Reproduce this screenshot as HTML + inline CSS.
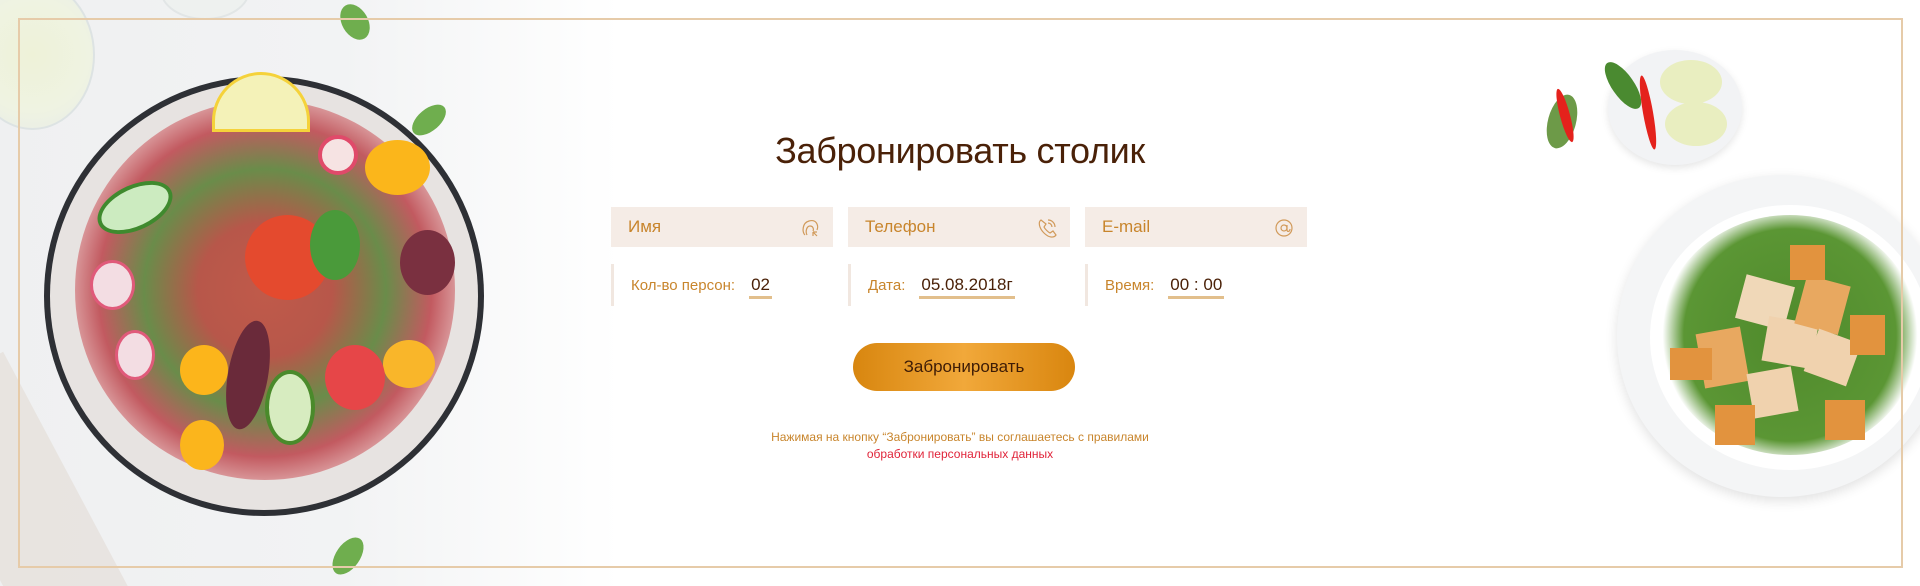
<!DOCTYPE html>
<html><head><meta charset="utf-8"><style>
*{margin:0;padding:0;box-sizing:border-box}
html,body{width:1920px;height:586px;overflow:hidden}
body{background:#fff;font-family:"Liberation Sans","DejaVu Sans",sans-serif}
#wrap{position:relative;width:1920px;height:586px;overflow:hidden}
.abs{position:absolute}
.frame{position:absolute;left:18px;top:18px;width:1885px;height:550px;border:2px solid #e6cba9}
.leftbg{position:absolute;left:0;top:0;width:620px;height:586px;background:linear-gradient(90deg,#eff0f1 0%,#f2f3f4 55%,rgba(255,255,255,0) 100%)}
h1{position:absolute;left:0;width:1920px;top:130px;text-align:center;font-size:36px;font-weight:normal;color:#4a2108;letter-spacing:-0.3px}
.inp{position:absolute;top:207px;width:222px;height:40px;background:#f5ece6;color:#c8852c;font-size:17px;line-height:40px;padding-left:17px}
.inp svg{position:absolute;right:12px;top:10px}
.row2{position:absolute;top:264px;height:42px;border-left:3px solid #f1e7e0;font-size:15px;color:#c8852c;line-height:44px;padding-left:17px;width:222px}
.val{display:inline-block;color:#4a2108;font-size:17px;border-bottom:3px solid #e2bf8c;line-height:22px;margin-left:14px;padding:0 2px}
.btn{position:absolute;left:853px;top:343px;width:222px;height:48px;border-radius:24px;background:linear-gradient(90deg,#d8860f 0%,#f1a83a 50%,#d9860f 100%);color:#3e1c06;font-size:17px;text-align:center;line-height:48px}
.note{position:absolute;left:0;width:1920px;top:429px;text-align:center;font-size:12px;line-height:17px;color:#c8852c}
.note span{color:#e0243a}
</style></head><body><div id="wrap">
<div class="leftbg"></div>
<div class="abs" style="left:-30px;top:360px;width:110px;height:300px;background:#e6e1dc;transform:rotate(-28deg);opacity:.8"></div>
<div class="abs" style="left:-30px;top:-20px;width:125px;height:150px;border-radius:50%;background:radial-gradient(circle,#eef2d8 0%,#eff3e2 60%,#e6ebe9 100%);border:2px solid #dde3e3"></div>
<div class="abs" style="left:160px;top:-40px;width:90px;height:60px;border-radius:50%;background:#eef1ef;border:2px solid #e2e6e6"></div>
<!-- left plate -->
<div class="abs" style="left:44px;top:76px;width:440px;height:440px;border-radius:50%;background:#2e3035"></div>
<div class="abs" style="left:50px;top:82px;width:428px;height:428px;border-radius:50%;background:#e7e3e1"></div>
<div class="abs" style="left:75px;top:100px;width:380px;height:380px;border-radius:50%;background:radial-gradient(circle at 50% 50%,#c05a4a 0%,#b7574a 25%,#6a8c4a 45%,#c25a60 62%,rgba(235,190,190,.8) 78%,rgba(231,227,225,0) 100%)"></div>
<div class="abs" style="left:212px;top:72px;width:98px;height:60px;border-radius:50px 50px 0 0;background:#f4f2b8;border:3px solid #f5d23a"></div>
<div class="abs" style="left:318px;top:135px;width:40px;height:40px;border-radius:50%;background:#f6e3e3;border:4px solid #e04a6a"></div>
<div class="abs" style="left:245px;top:215px;width:85px;height:85px;border-radius:50%;background:#e44a2e"></div>
<div class="abs" style="left:365px;top:140px;width:65px;height:55px;border-radius:50%;background:#fbb61b"></div>
<div class="abs" style="left:383px;top:340px;width:52px;height:48px;border-radius:50%;background:#f9b62a"></div>
<div class="abs" style="left:180px;top:345px;width:48px;height:50px;border-radius:50%;background:#fcb51b"></div>
<div class="abs" style="left:180px;top:420px;width:44px;height:50px;border-radius:50%;background:#fbb51c"></div>
<div class="abs" style="left:325px;top:345px;width:60px;height:65px;border-radius:50%;background:#e64648"></div>
<div class="abs" style="left:95px;top:185px;width:80px;height:45px;border-radius:50%;background:#ccebc0;border:4px solid #3f8a2e;transform:rotate(-25deg)"></div>
<div class="abs" style="left:310px;top:210px;width:50px;height:70px;border-radius:50%;background:#4a9a3a"></div>
<div class="abs" style="left:265px;top:370px;width:50px;height:75px;border-radius:50%;background:#d7ecc0;border:4px solid #4a8a2b"></div>
<div class="abs" style="left:228px;top:320px;width:40px;height:110px;border-radius:50%;background:#6a2a3a;transform:rotate(10deg)"></div>
<div class="abs" style="left:400px;top:230px;width:55px;height:65px;border-radius:50%;background:#7a3040"></div>
<div class="abs" style="left:90px;top:260px;width:45px;height:50px;border-radius:50%;background:#f3dde3;border:3px solid #e05a7a"></div>
<div class="abs" style="left:115px;top:330px;width:40px;height:50px;border-radius:50%;background:#f3dde3;border:3px solid #e05a7a"></div>
<div class="abs" style="left:342px;top:3px;width:26px;height:38px;border-radius:50%;background:#6fae4e;transform:rotate(-30deg)"></div>
<div class="abs" style="left:418px;top:100px;width:22px;height:40px;border-radius:50%;background:#6fae4e;transform:rotate(50deg)"></div>
<div class="abs" style="left:336px;top:535px;width:24px;height:42px;border-radius:50%;background:#6fae4e;transform:rotate(35deg)"></div>
<!-- right bowl -->
<div class="abs" style="left:1608px;top:50px;width:134px;height:115px;border-radius:50%;background:#f2f3f5;box-shadow:0 3px 8px rgba(0,0,0,.1)"></div>
<div class="abs" style="left:1660px;top:60px;width:62px;height:44px;border-radius:50%;background:#e9eec0"></div>
<div class="abs" style="left:1665px;top:102px;width:62px;height:44px;border-radius:50%;background:#e9eec0"></div>
<div class="abs" style="left:1612px;top:58px;width:22px;height:55px;border-radius:50%;background:#4a8a30;transform:rotate(-35deg)"></div>
<div class="abs" style="left:1643px;top:75px;width:10px;height:75px;border-radius:50%;background:#e4221c;transform:rotate(-10deg)"></div>
<div class="abs" style="left:1548px;top:94px;width:28px;height:55px;border-radius:50%;background:#6d9a48;transform:rotate(15deg)"></div>
<div class="abs" style="left:1560px;top:88px;width:10px;height:55px;border-radius:50%;background:#e4221c;transform:rotate(-15deg)"></div>
<!-- right plate -->
<div class="abs" style="left:1617px;top:175px;width:330px;height:322px;border-radius:50%;background:#f4f5f6;box-shadow:0 4px 12px rgba(0,0,0,.12)"></div>
<div class="abs" style="left:1650px;top:205px;width:280px;height:265px;border-radius:50%;background:#fff"></div>
<div class="abs" style="left:1660px;top:215px;width:260px;height:240px;border-radius:50%;background:radial-gradient(circle,#4f8a2c 0%,#5b9634 60%,rgba(255,255,255,0) 72%)"></div>
<div class="abs" style="left:1740px;top:280px;width:50px;height:45px;background:#f0d8b8;transform:rotate(15deg)"></div>
<div class="abs" style="left:1700px;top:330px;width:45px;height:55px;background:#e8a860;transform:rotate(-10deg)"></div>
<div class="abs" style="left:1765px;top:320px;width:50px;height:45px;background:#f0d2ae;transform:rotate(10deg)"></div>
<div class="abs" style="left:1800px;top:280px;width:45px;height:50px;background:#e8a860;transform:rotate(15deg)"></div>
<div class="abs" style="left:1810px;top:335px;width:45px;height:45px;background:#f0d2ae;transform:rotate(20deg)"></div>
<div class="abs" style="left:1750px;top:370px;width:45px;height:45px;background:#f0d2ae;transform:rotate(-10deg)"></div>
<div class="abs" style="left:1670px;top:348px;width:42px;height:32px;background:#e2933e"></div>
<div class="abs" style="left:1850px;top:315px;width:35px;height:40px;background:#e2933e"></div>
<div class="abs" style="left:1790px;top:245px;width:35px;height:35px;background:#e2933e"></div>
<div class="abs" style="left:1825px;top:400px;width:40px;height:40px;background:#e2933e"></div>
<div class="abs" style="left:1715px;top:405px;width:40px;height:40px;background:#e2933e"></div>

<div class="frame"></div>

<h1>Забронировать столик</h1>
<div class="inp" style="left:611px">Имя<svg width="22" height="22" viewBox="0 0 22 22" fill="none" stroke="#d19a5a" stroke-width="1.2"><path d="M6 18C3 15 3 6 10 4s10 4 8 9"/><path d="M8 18c-2-4 0-9 3-9s4 3 3 5"/><path d="M14 15l4 4M14 15v4M14 15h4"/></svg></div>
<div class="inp" style="left:848px">Телефон<svg width="22" height="22" viewBox="0 0 22 22" fill="none" stroke="#d19a5a" stroke-width="1.2"><path d="M5 3c-3 2-2 8 3 13s10 5 12 2l-3-4-3 2c-2-1-5-4-6-6l2-3z"/><path d="M12 3a7 7 0 0 1 7 7M12 6a4 4 0 0 1 4 4"/></svg></div>
<div class="inp" style="left:1085px">E-mail<svg width="22" height="22" viewBox="0 0 22 22" fill="none" stroke="#d19a5a" stroke-width="1.2"><circle cx="11" cy="11" r="8"/><circle cx="11" cy="11" r="3"/><path d="M14 8v5c0 2 3 2 3-1"/></svg></div>

<div class="row2" style="left:611px">Кол-во персон:<span class="val">02</span></div>
<div class="row2" style="left:848px">Дата:<span class="val">05.08.2018г</span></div>
<div class="row2" style="left:1085px">Время:<span class="val">00 : 00</span></div>

<div class="btn">Забронировать</div>
<div class="note">Нажимая на кнопку “Забронировать” вы соглашаетесь с правилами<br><span>обработки персональных данных</span></div>
</div></body></html>
